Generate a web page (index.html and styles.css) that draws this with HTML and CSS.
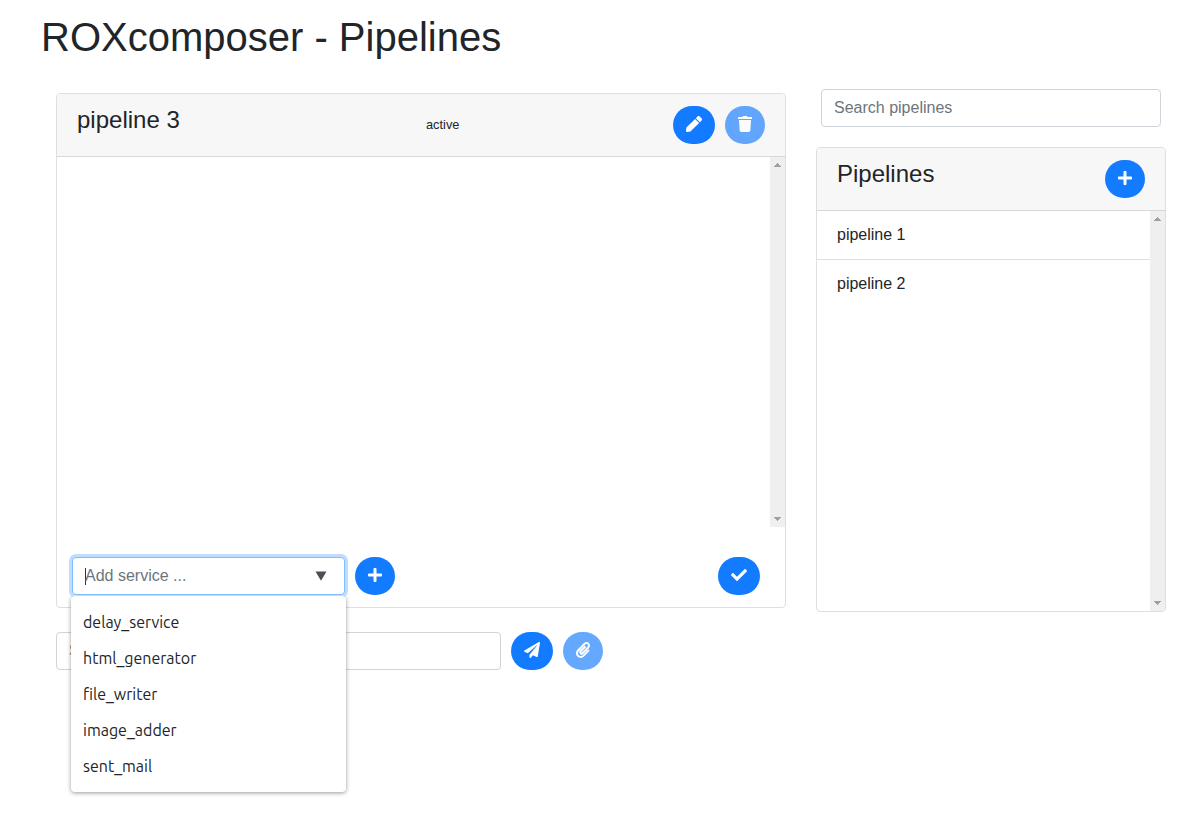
FILE: index.html
```html
<!DOCTYPE html>
<html lang="en">
<head>
<meta charset="utf-8">
<title>ROXcomposer - Pipelines</title>
<link rel="stylesheet" href="styles.css">
</head>
<body>
<svg class="sprite" width="0" height="0" aria-hidden="true">
  <symbol id="plus" viewBox="0 0 448 512"><path d="M416 208H272V64c0-17.67-14.33-32-32-32h-32c-17.67 0-32 14.33-32 32v144H32c-17.67 0-32 14.33-32 32v32c0 17.67 14.33 32 32 32h144v144c0 17.67 14.33 32 32 32h32c17.67 0 32-14.33 32-32V304h144c17.67 0 32-14.33 32-32v-32c0-17.67-14.33-32-32-32z"/></symbol>
  <symbol id="pen" viewBox="0 0 512 512"><path d="M290.74 93.24l128.02 128.02-277.99 277.99-114.14 12.6C11.35 513.54-1.56 500.62.14 485.34l12.7-114.22 277.9-277.88zm207.2-19.06l-60.11-60.11c-18.75-18.75-49.16-18.75-67.91 0l-56.55 56.55 128.02 128.02 56.55-56.55c18.75-18.76 18.75-49.16 0-67.91z"/></symbol>
  <symbol id="trash" viewBox="0 0 448 512"><path d="M432 32H312l-9.4-18.7A24 24 0 0 0 281.1 0H166.8a23.72 23.72 0 0 0-21.4 13.3L136 32H16A16 16 0 0 0 0 48v32a16 16 0 0 0 16 16h416a16 16 0 0 0 16-16V48a16 16 0 0 0-16-16zM53.2 467a48 48 0 0 0 47.9 45h245.8a48 48 0 0 0 47.9-45L416 128H32z"/></symbol>
  <symbol id="check" viewBox="0 0 512 512"><path d="M173.898 439.404l-166.4-166.4c-9.997-9.997-9.997-26.206 0-36.204l36.203-36.204c9.997-9.998 26.207-9.998 36.204 0L192 312.69 432.095 72.596c9.997-9.997 26.207-9.997 36.204 0l36.203 36.204c9.997 9.997 9.997 26.206 0 36.204l-294.4 294.401c-9.998 9.997-26.207 9.997-36.204-.001z"/></symbol>
  <symbol id="plane" viewBox="0 0 512 512"><path d="M476 3.2L12.5 270.6c-18.1 10.4-15.8 35.6 2.2 43.2L121 358.4l287.3-253.2c5.5-4.9 13.3 2.6 8.6 8.3L176 407v80.5c0 23.6 28.5 32.9 42.5 15.8L282 426l124.6 52.2c14.2 6 30.4-2.9 33-18.2l72-432C515 7.8 493.3-6.8 476 3.2z"/></symbol>
  <symbol id="clip" viewBox="0 0 448 512"><path d="M43.246 466.142c-58.43-60.289-57.341-157.511 1.386-217.581L254.392 34c44.316-45.332 116.351-45.336 160.671 0 43.89 44.894 43.943 117.329 0 162.276L232.214 383.128c-29.855 30.537-78.633 30.111-107.982-.998-28.275-29.97-27.368-77.473 1.452-106.953l143.743-146.835c6.182-6.314 16.312-6.422 22.626-.241l22.861 22.379c6.315 6.182 6.422 16.312.241 22.626L171.427 319.927c-4.932 5.045-5.236 13.428-.648 18.292 4.372 4.634 11.245 4.711 15.688.165l182.849-186.851c19.613-20.062 19.613-52.725-.011-72.798-19.189-19.627-49.957-19.637-69.154 0L90.39 293.295c-34.763 35.56-35.299 93.12-1.191 128.313 34.01 35.093 88.985 35.137 123.058.286l172.06-175.999c6.177-6.319 16.307-6.433 22.626-.256l22.877 22.364c6.319 6.177 6.434 16.307.256 22.626l-172.06 175.998c-59.576 60.938-155.943 60.216-214.77-.485z"/></symbol>
  <symbol id="up" viewBox="0 0 7 4"><path d="M3 0h1v1h1v1h1v1h1v1H0V3h1V2h1V1h1z"/></symbol>
  <symbol id="down" viewBox="0 0 7 4"><path d="M0 0h7v1H6v1H5v1H4v1H3V3H2V2H1V1H0z"/></symbol>
</svg>

<h1 class="title">ROXcomposer - Pipelines</h1>

<div class="layout">
  <main class="editor">
    <section class="card pipeline">
      <header class="card-header">
        <h2 class="card-title name">pipeline 3</h2>
        <span class="status">active</span>
        <div class="actions">
          <button class="btn wide"><svg class="icon"><use href="#pen"/></svg></button>
          <button class="btn faded"><svg class="icon narrow"><use href="#trash"/></svg></button>
        </div>
      </header>
      <div class="scroll-area services">
        <div class="scroll-content"></div>
        <div class="scrollbar"><svg class="arrow"><use href="#up"/></svg><svg class="arrow"><use href="#down"/></svg></div>
      </div>
      <div class="service-row">
        <div class="combo">
          <div class="field focused"><span class="caret"></span><span class="hint">Add service ...</span><svg class="toggle" viewBox="0 0 12 10"><path d="M.5.5h11L6 9.7z"/></svg></div>
          <ul class="menu">
            <li>delay_service</li>
            <li>html_generator</li>
            <li>file_writer</li>
            <li>image_adder</li>
            <li>sent_mail</li>
          </ul>
        </div>
        <button class="btn"><svg class="icon narrow"><use href="#plus"/></svg></button>
        <button class="btn wide confirm"><svg class="icon"><use href="#check"/></svg></button>
      </div>
    </section>
    <div class="send-row">
      <div class="field message">Send message</div>
      <button class="btn wide"><svg class="icon"><use href="#plane"/></svg></button>
      <button class="btn faded"><svg class="icon narrow"><use href="#clip"/></svg></button>
    </div>
  </main>

  <aside class="sidebar">
    <div class="field search">Search pipelines</div>
    <section class="card list">
      <header class="card-header">
        <h2 class="card-title">Pipelines</h2>
        <div class="actions"><button class="btn"><svg class="icon narrow"><use href="#plus"/></svg></button></div>
      </header>
      <div class="scroll-area">
        <div class="scroll-content">
          <div class="entry">pipeline 1</div>
          <div class="entry">pipeline 2</div>
        </div>
        <div class="scrollbar"><svg class="arrow"><use href="#up"/></svg><svg class="arrow"><use href="#down"/></svg></div>
      </div>
    </section>
  </aside>
</div>
</body>
</html>
```

FILE: styles.css
```css
* { box-sizing: border-box; }

body {
  margin: 0;
  padding: 13px 18px 0 41px;
  height: 815px;
  overflow: hidden;
  background: #fff;
  color: #212529;
  font: 16px/24px "Liberation Sans", Arial, sans-serif;
}

.sprite { position: absolute; }

.title {
  margin: 0;
  font-size: 40px;
  line-height: 48px;
  font-weight: 400;
}

.layout {
  display: flex;
  justify-content: space-between;
  align-items: flex-start;
  padding: 28px 0 0 15px;
}

.editor { width: 730px; padding-top: 4px; }
.sidebar { width: 350px; }

.card {
  display: flex;
  flex-direction: column;
  border: 1px solid #dfdfdf;
  border-radius: 4px;
  background: #fff;
}
.pipeline { height: 515px; }
.list { height: 465px; margin-top: 20px; overflow: hidden; }

.card-header {
  display: flex;
  flex: none;
  height: 63px;
  padding: 12px 20px;
  background: #f7f7f7;
  border-bottom: 1px solid #d8d8d8;
  border-radius: 3px 3px 0 0;
}
.card-title {
  margin: 0;
  font-size: 24px;
  line-height: 28px;
  font-weight: 400;
}
.name { width: 349px; }
.status { font-size: 12.8px; line-height: 38px; }
.actions { display: flex; gap: 10px; margin-left: auto; }

.btn {
  display: flex;
  flex: none;
  align-items: center;
  justify-content: center;
  width: 40px;
  height: 38px;
  padding: 0 0 2px;
  border: 0;
  border-radius: 20px;
  background: #127bff;
  color: #fff;
}
.wide { width: 42px; }
.faded { opacity: .65; }

.icon { width: 16px; height: 16px; fill: currentColor; }
.narrow { width: 14px; }

.scroll-area { display: flex; flex: 1; min-height: 0; }
.services { flex: none; height: 370px; }
.scroll-content { flex: 1; }
.scrollbar {
  display: flex;
  flex-direction: column;
  justify-content: space-between;
  align-items: center;
  width: 15px;
  padding: 6px 0;
  background: #efefef;
}
.arrow { width: 7px; height: 4px; fill: #a0a0a0; shape-rendering: crispEdges; }

.entry { height: 49px; padding: 12px 20px; }
.entry:first-child { border-bottom: 1px solid #dfdfdf; }

.field {
  display: flex;
  align-items: center;
  height: 38px;
  padding: 0 12px;
  border: 1px solid #ced4da;
  border-radius: 4px;
  background: #fff;
  color: #6c757d;
}
.search { margin: 0 5px; }
.message { width: 445px; }

.service-row {
  display: flex;
  gap: 10px;
  margin-top: 30px;
  padding: 0 25px 0 15px;
}
.combo { position: relative; width: 273px; }
.focused { border-color: #80bdff; box-shadow: 0 0 0 3px #bfdeff; }
.caret { width: 1px; height: 17px; margin-right: -1px; background: #333; }
.toggle { width: 12px; height: 10px; margin: 0 5px 0 auto; fill: #495057; }
.confirm { margin-left: auto; }

.menu {
  position: absolute;
  z-index: 2;
  top: 39px;
  left: -1px;
  width: 275px;
  height: 196px;
  margin: 0;
  padding: 8px 12px;
  list-style: none;
  border-radius: 4px;
  background: #fff;
  box-shadow: 0 1px 4px rgba(0, 0, 0, .4);
  clip-path: inset(0 -8px -8px -8px);
  font-family: Ubuntu, "Noto Sans", sans-serif;
  line-height: 36px;
}

.send-row { display: flex; gap: 10px; margin-top: 24px; }
```
